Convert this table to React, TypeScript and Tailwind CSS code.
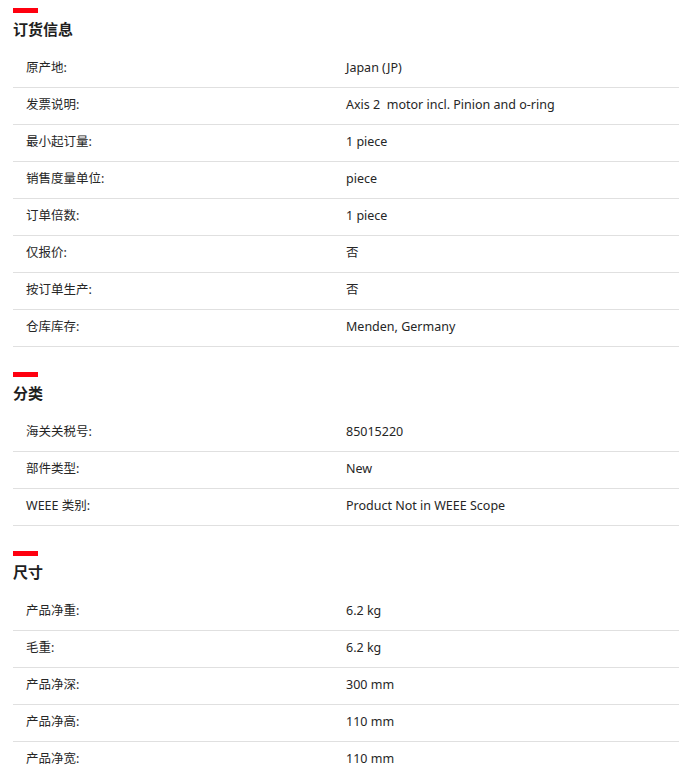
type Row = { label: string; value: string };
type Section = { title: string; rows: Row[] };

const sections: Section[] = [
    {
        title: "订货信息",
        rows: [
            { label: "原产地:", value: "Japan (JP)" },
            { label: "发票说明:", value: "Axis 2  motor incl. Pinion and o-ring" },
            { label: "最小起订量:", value: "1 piece" },
            { label: "销售度量单位:", value: "piece" },
            { label: "订单倍数:", value: "1 piece" },
            { label: "仅报价:", value: "否" },
            { label: "按订单生产:", value: "否" },
            { label: "仓库库存:", value: "Menden, Germany" },
        ],
    },
    {
        title: "分类",
        rows: [
            { label: "海关关税号:", value: "85015220" },
            { label: "部件类型:", value: "New" },
            { label: "WEEE 类别:", value: "Product Not in WEEE Scope" },
        ],
    },
    {
        title: "尺寸",
        rows: [
            { label: "产品净重:", value: "6.2 kg" },
            { label: "毛重:", value: "6.2 kg" },
            { label: "产品净深:", value: "300 mm" },
            { label: "产品净高:", value: "110 mm" },
            { label: "产品净宽:", value: "110 mm" },
        ],
    },
];

const App = () => {
    return (
        <div className="min-h-screen bg-white pl-[13px] pt-[8px] text-[#262626] font-['Noto_Sans','Noto_Sans_CJK_SC',sans-serif]">
            {sections.map((section, index) => (
                <div key={index} className={index > 0 ? "mt-[25px]" : ""}>
                    {/* red accent bar */}
                    <div className="w-[25px] h-[5px] bg-[#ff000f]" />
                    <h2 className="mt-[6px] text-[15px] leading-[20px] font-bold text-[#1f1f1f]">{section.title}</h2>
                    <div className="mt-[12px]">
                        {section.rows.map((row, i) => (
                            <div
                                key={i}
                                className="flex items-center h-[37px] pb-[1px] border-b border-[#e0e0e0] text-[12.5px]"
                            >
                                <div className="w-[333px] pl-[13px]">{row.label}</div>
                                <div className="whitespace-pre">{row.value}</div>
                            </div>
                        ))}
                    </div>
                </div>
            ))}
        </div>
    );
};

export default App;
